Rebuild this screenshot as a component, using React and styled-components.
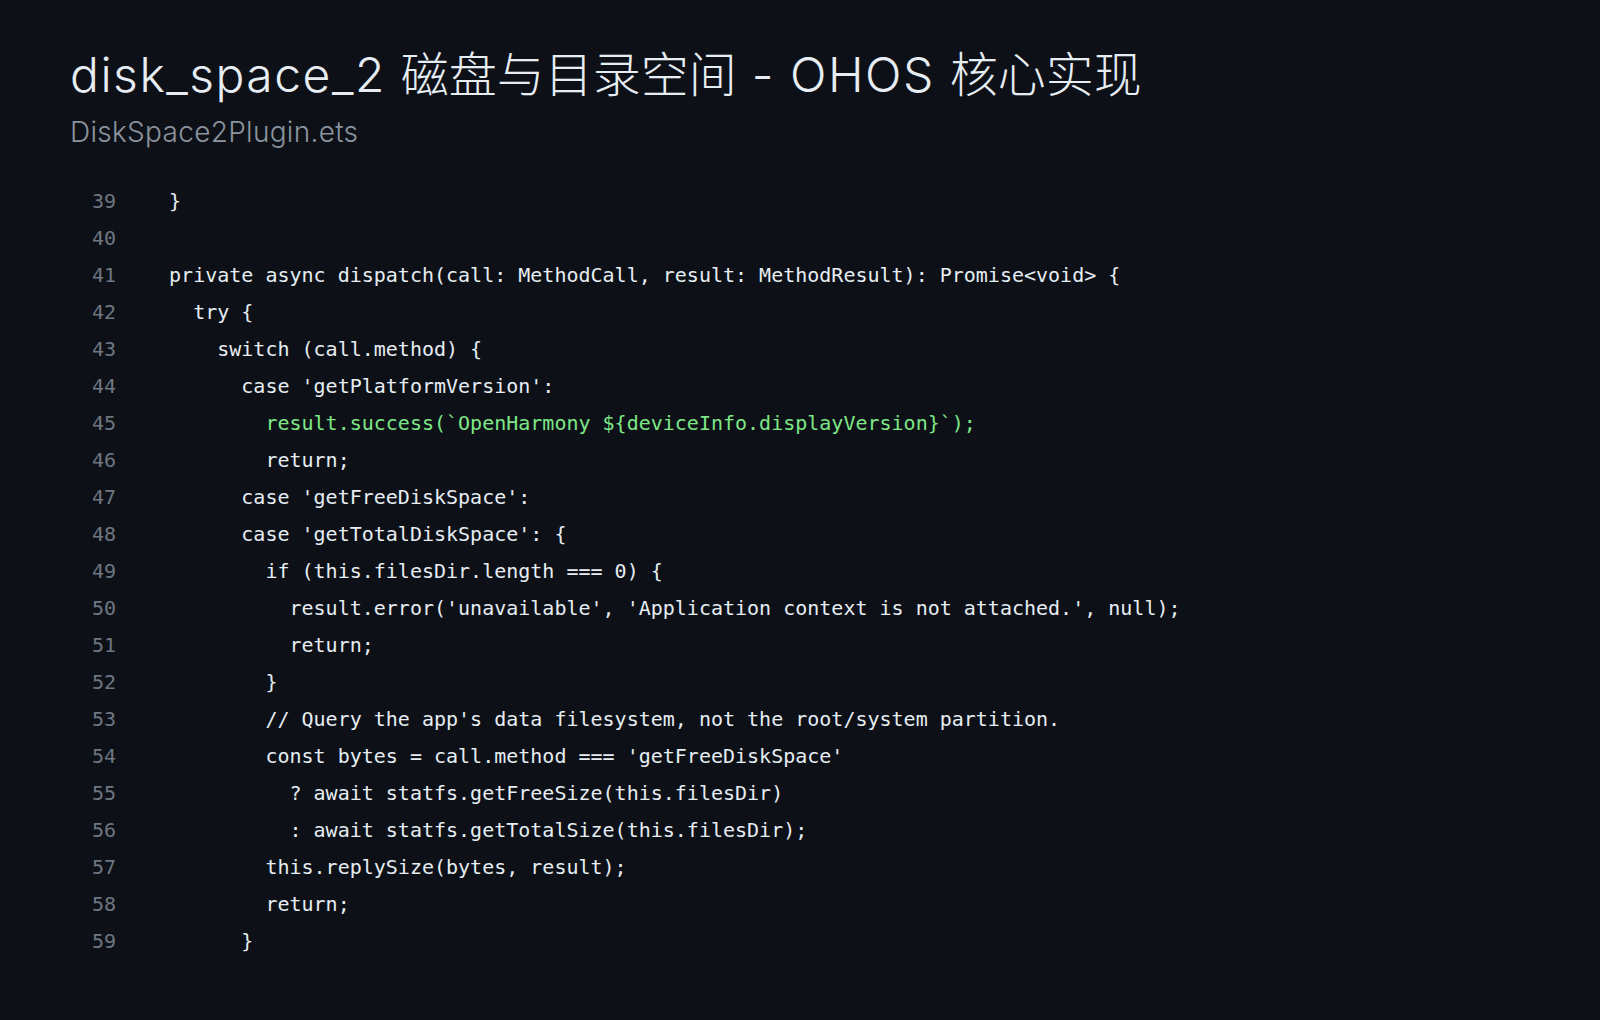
import React from "react";
import styled, { createGlobalStyle } from "styled-components";

const Global = createGlobalStyle`
  html, body { margin: 0; padding: 0; background: #0d1117; }
  body { width: 1600px; height: 1020px; overflow: hidden; }
`;

const Page = styled.div`
  box-sizing: border-box;
  width: 1600px;
  height: 1020px;
  padding: 45px 70px 0 70px;
  background: #0d1117;
  display: flex;
  flex-direction: column;
`;

const Title = styled.h1`
  margin: 0;
  font-family: Inter, "Noto Sans CJK SC", sans-serif;
  font-weight: 300;
  font-size: 48px;
  line-height: 60px;
  color: #e6edf3;
`;

const Latin = styled.span`
  letter-spacing: 1.5px;
`;

const Subtitle = styled.div`
  margin-top: 11px;
  font-family: Inter, sans-serif;
  font-weight: 300;
  font-size: 28px;
  line-height: 33.6px;
  letter-spacing: 0.3px;
  color: #8b949e;
`;

const Code = styled.div`
  margin-top: 33px;
  display: flex;
  flex-direction: column;
  font-family: "DejaVu Sans Mono", monospace;
  font-size: 20px;
`;

const Row = styled.div`
  display: grid;
  grid-template-columns: 46px 1fr;
  column-gap: 29px;
  height: 37px;
  line-height: 37px;
`;

const Num = styled.span`
  text-align: right;
  color: #6e7681;
`;

const Text = styled.span`
  white-space: pre;
  color: ${(p) => (p.$hl ? "#7ee787" : "#e6edf3")};
`;

const lines = [
  [39, "  }"],
  [40, ""],
  [41, "  private async dispatch(call: MethodCall, result: MethodResult): Promise<void> {"],
  [42, "    try {"],
  [43, "      switch (call.method) {"],
  [44, "        case 'getPlatformVersion':"],
  [45, "          result.success(`OpenHarmony ${deviceInfo.displayVersion}`);", true],
  [46, "          return;"],
  [47, "        case 'getFreeDiskSpace':"],
  [48, "        case 'getTotalDiskSpace': {"],
  [49, "          if (this.filesDir.length === 0) {"],
  [50, "            result.error('unavailable', 'Application context is not attached.', null);"],
  [51, "            return;"],
  [52, "          }"],
  [53, "          // Query the app's data filesystem, not the root/system partition."],
  [54, "          const bytes = call.method === 'getFreeDiskSpace'"],
  [55, "            ? await statfs.getFreeSize(this.filesDir)"],
  [56, "            : await statfs.getTotalSize(this.filesDir);"],
  [57, "          this.replySize(bytes, result);"],
  [58, "          return;"],
  [59, "        }"],
];

export default function App() {
  return (
    <>
      <Global />
      <Page>
        <Title>
          <Latin>disk_space_2 </Latin>磁盘与目录空间<Latin> - OHOS </Latin>核心实现
        </Title>
        <Subtitle>DiskSpace2Plugin.ets</Subtitle>
        <Code>
          {lines.map(([n, t, hl]) => (
            <Row key={n}>
              <Num>{n}</Num>
              <Text $hl={hl}>{t}</Text>
            </Row>
          ))}
        </Code>
      </Page>
    </>
  );
}
